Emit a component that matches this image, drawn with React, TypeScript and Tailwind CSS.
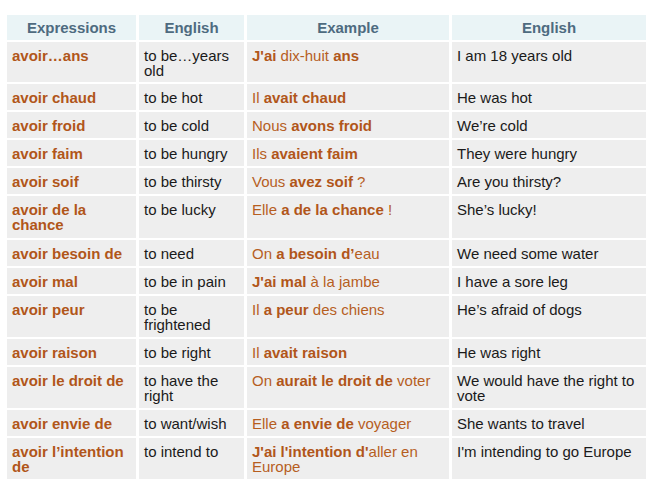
import React from "react";

type Seg = [string, boolean];
const rows: { e: string; en: string; ex: Seg[]; tr: string }[] = [
  { e: "avoir…ans", en: "to be…years old", ex: [["J'ai", true], [" dix-huit ", false], ["ans", true]], tr: "I am 18 years old" },
  { e: "avoir chaud", en: "to be hot", ex: [["Il ", false], ["avait chaud", true]], tr: "He was hot" },
  { e: "avoir froid", en: "to be cold", ex: [["Nous ", false], ["avons froid", true]], tr: "We’re cold" },
  { e: "avoir faim", en: "to be hungry", ex: [["Ils ", false], ["avaient faim", true]], tr: "They were hungry" },
  { e: "avoir soif", en: "to be thirsty", ex: [["Vous ", false], ["avez soif", true], [" ?", false]], tr: "Are you thirsty?" },
  { e: "avoir de la chance", en: "to be lucky", ex: [["Elle ", false], ["a de la chance", true], [" !", false]], tr: "She’s lucky!" },
  { e: "avoir besoin de", en: "to need", ex: [["On ", false], ["a besoin d’", true], ["eau", false]], tr: "We need some water" },
  { e: "avoir mal", en: "to be in pain", ex: [["J'ai mal", true], [" à la jambe", false]], tr: "I have a sore leg" },
  { e: "avoir peur", en: "to be frightened", ex: [["Il ", false], ["a peur", true], [" des chiens", false]], tr: "He’s afraid of dogs" },
  { e: "avoir raison", en: "to be right", ex: [["Il ", false], ["avait raison", true]], tr: "He was right" },
  { e: "avoir le droit de", en: "to have the right", ex: [["On ", false], ["aurait le droit de", true], [" voter", false]], tr: "We would have the right to vote" },
  { e: "avoir envie de", en: "to want/wish", ex: [["Elle ", false], ["a envie de", true], [" voyager", false]], tr: "She wants to travel" },
  { e: "avoir l’intention de", en: "to intend to", ex: [["J'ai l'intention d'", true], ["aller en Europe", false]], tr: "I'm intending to go Europe" },
];

export default function App() {
  const cell = "bg-[#eeeeee] pl-[5px] pr-[5px] pt-[6px] overflow-hidden";
  const head = "bg-[#eaf4f6] pt-[5px] text-center font-bold text-[#4e6b80]";
  return (
    <div
      className="w-[651px] h-[484px] bg-white pt-[15px] pl-[7px] text-[15px] leading-[15px] text-[#1a1a1a]"
      style={{ fontFamily: '"Liberation Sans", Arial, sans-serif' }}
    >
      <div className="grid grid-cols-[129px_105px_202px_194px] grid-rows-[25px_40px_26px_26px_26px_26px_42px_26px_26px_41px_26px_41px_26px_41px] gap-x-[3px] gap-y-[2px]">
        <div className={head}>Expressions</div>
        <div className={head}>English</div>
        <div className={head}>Example</div>
        <div className={head}>English</div>
        {rows.map((r, i) => (
          <React.Fragment key={i}>
            <div className={`${cell} font-bold text-[#b1561a]`}>{r.e}</div>
            <div className={cell}>{r.en}</div>
            <div className={`${cell} text-[#b65e1f]`}>
              {r.ex.map(([t, b], j) =>
                b ? (
                  <span key={j} className="font-bold text-[#b1561a]">{t}</span>
                ) : (
                  <span key={j}>{t}</span>
                )
              )}
            </div>
            <div className={cell}>{r.tr}</div>
          </React.Fragment>
        ))}
      </div>
    </div>
  );
}
